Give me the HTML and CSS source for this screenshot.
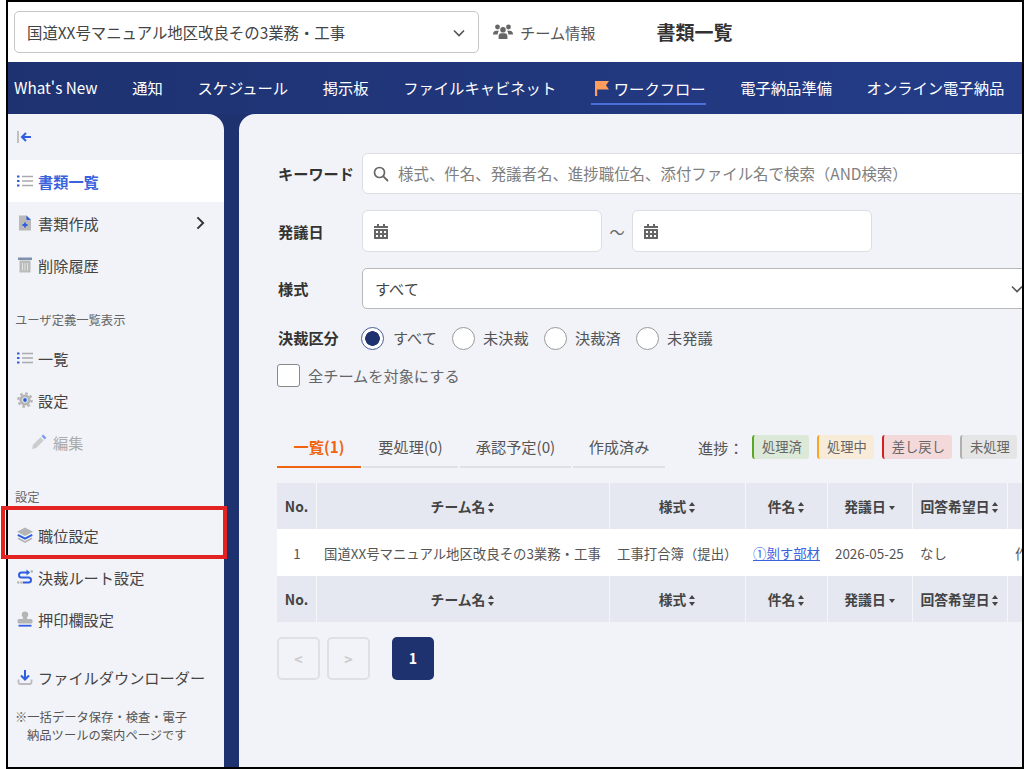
FILE: index.html
```html
<!DOCTYPE html>
<html lang="ja">
<head>
    <meta charset="UTF-8">
    <title>書類一覧</title>
    <link rel="stylesheet" href="styles.css">
</head>
<body>
    <div class="page">
        <div class="frame">
            <header class="topbar">
                <div class="selectbox selectbox--team">
                    <span>国道XX号マニュアル地区改良その3業務・工事</span>
                    <svg class="chev" viewBox="0 0 12 8"><path d="M1 1.5l5 5 5-5" fill="none" stroke="#555" stroke-width="1.6"/></svg>
                </div>
                <a class="teaminfo">
                    <svg viewBox="0 0 20 16" width="20" height="16" fill="#666"><circle cx="4.5" cy="3" r="2.4"/><circle cx="15.5" cy="3" r="2.4"/><circle cx="10" cy="5.8" r="2.8"/><path d="M0 10.5c0-2.4 1.4-3.7 3-3.7h3c-.8.8-1.3 2-1.3 3.7zM20 10.5c0-2.4-1.4-3.7-3-3.7h-3c.8.8 1.3 2 1.3 3.7zM5.6 15v-2.8c0-2 1.2-3 2.6-3h3.6c1.4 0 2.6 1 2.6 3V15z"/></svg>
                    チーム情報
                </a>
                <h1 class="pagetitle">書類一覧</h1>
            </header>

            <nav class="gnav">
                <a>What's New</a>
                <a>通知</a>
                <a>スケジュール</a>
                <a>掲示板</a>
                <a>ファイルキャビネット</a>
                <a class="is-active">
                    <svg viewBox="0 0 14 16" width="14" height="16"><path d="M0 1h14l-3 4.2L14 9.500H2.200V16H0z" fill="#ff9d5c"/></svg>
                    ワークフロー
                </a>
                <a>電子納品準備</a>
                <a>オンライン電子納品</a>
            </nav>

            <div class="wrap">
                <aside class="side">
                    <div class="side__toggle">
                        <svg viewBox="0 0 15 12" width="15" height="12"><path d="M1 0v12" stroke="#aaa" stroke-width="1.4"/><path d="M14 6H5M9 2L5 6l4 4" fill="none" stroke="#2f5fe0" stroke-width="2"/></svg>
                    </div>
                    <a class="side__item is-active">
                        <svg class="ico" viewBox="0 0 16 16"><path d="M5 3.500h11M5 8h11M5 12.500h11" stroke="#aaa" stroke-width="1.400"/><path d="M0 3.500h2.500M0 8h2.500M0 12.500h2.500" stroke="#2f5fe0" stroke-width="2.200"/></svg>
                        書類一覧
                    </a>
                    <a class="side__item">
                        <svg class="ico" viewBox="0 0 16 16"><path d="M2 .5h7.500l4.500 4.500v10.500H2z" fill="#b9b9b9"/><path d="M9.500.5L14 5H9.500z" fill="#2f5fe0"/><path d="M8 7.500v5M5.500 10h5" stroke="#2f5fe0" stroke-width="1.800"/></svg>
                        書類作成
                        <svg class="side__arrow" viewBox="0 0 10 16"><path d="M1.500 1.500L8 8l-6.500 6.500" fill="none" stroke="#333" stroke-width="2.200"/></svg>
                    </a>
                    <a class="side__item">
                        <svg class="ico" viewBox="0 0 16 16"><path d="M1 .5h14v2.500H1z" fill="#7f8fae"/><path d="M2.500 3.500h11v12h-11z" fill="#bbb"/><path d="M5.500 6v7.500M8 6v7.500M10.500 6v7.500" stroke="#e8e8e8" stroke-width=".9"/></svg>
                        削除履歴
                    </a>

                    <div class="side__label side__label--first">ユーザ定義一覧表示</div>
                    <a class="side__item">
                        <svg class="ico" viewBox="0 0 16 16"><path d="M5 3.500h11M5 8h11M5 12.500h11" stroke="#aaa" stroke-width="1.400"/><path d="M0 3.500h2.500M0 8h2.500M0 12.500h2.500" stroke="#2f5fe0" stroke-width="2.200"/></svg>
                        一覧
                    </a>
                    <a class="side__item">
                        <svg class="ico" viewBox="0 0 16 16"><circle cx="8" cy="8" r="6.600" fill="none" stroke="#b5b5b5" stroke-width="2.400" stroke-dasharray="2.600 2.580"/><circle cx="8" cy="8" r="4.200" fill="none" stroke="#b5b5b5" stroke-width="2.800"/><circle cx="8" cy="8" r="1.900" fill="#2f5fe0"/></svg>
                        設定
                    </a>
                    <a class="side__item side__item--sub">
                        <svg class="ico" viewBox="0 0 16 16"><path d="M1 15l1-4.200 7.500-7.500 3.200 3.200L5.200 14z" fill="#ccc"/><path d="M10.500 2.300l1.700-1.700 3.200 3.200-1.700 1.700z" fill="#7d9cf0"/></svg>
                        編集
                    </a>

                    <div class="side__label">設定</div>
                    <a class="side__item">
                        <svg class="ico" viewBox="0 0 16 16"><path d="M8 .5l8 4.300-8 4.300-8-4.300z" fill="#b5b5b5"/><path d="M.8 7.800L8 11.700l7.200-3.900" fill="none" stroke="#2f5fe0" stroke-width="2"/><path d="M1 11.200l7 3.800 7-3.800" fill="none" stroke="#b5b5b5" stroke-width="1.800"/></svg>
                        職位設定
                    </a>
                    <a class="side__item">
                        <svg class="ico" viewBox="0 0 16 16"><path d="M12 3.500H4.500a2.500 2.500 0 0 0 0 5h7a2.500 2.500 0 0 1 0 5H6" fill="none" stroke="#2f5fe0" stroke-width="2"/><path d="M9.500.5L13 3.500l-3.500 3z" fill="#2f5fe0"/><circle cx="14.800" cy="2.400" r="1.300" fill="#b5b5b5"/><circle cx="1.300" cy="13.500" r="1.300" fill="#b5b5b5"/><circle cx="4.500" cy="13.500" r="1.300" fill="#b5b5b5"/></svg>
                        決裁ルート設定
                    </a>
                    <a class="side__item">
                        <svg class="ico" viewBox="0 0 16 16"><circle cx="8" cy="3.600" r="3.200" fill="#b5b5b5"/><path d="M6.300 5h3.400l.6 3.500H5.700z" fill="#b5b5b5"/><rect x=".5" y="8" width="15" height="4.500" rx="1.500" fill="#b5b5b5"/><path d="M1.500 14.700h13" stroke="#2f5fe0" stroke-width="1.800"/></svg>
                        押印欄設定
                    </a>

                    <a class="side__item side__item--dl">
                        <svg class="ico" viewBox="0 0 16 16"><path d="M8 1v9M4 6.500l4 4 4-4" fill="none" stroke="#2f5fe0" stroke-width="2"/><path d="M1.500 10.500v3a1.500 1.500 0 0 0 1.500 1.500h10a1.500 1.500 0 0 0 1.500-1.500v-3" fill="none" stroke="#bbb" stroke-width="1.800"/></svg>
                        ファイルダウンローダー
                    </a>
                    <p class="side__note">※一括データ保存・検査・電子納品ツールの案内ページです</p>
                </aside>

                <main class="content">
                    <div class="form-row form-row--first">
                        <label class="form-label">キーワード</label>
                        <div class="field field--search">
                            <svg viewBox="0 0 16 16" width="16" height="16"><circle cx="6.500" cy="6.500" r="5" fill="none" stroke="#666" stroke-width="1.700"/><path d="M10.300 10.300L15 15" stroke="#666" stroke-width="1.900"/></svg>
                            <input type="text" placeholder="様式、件名、発議者名、進捗職位名、添付ファイル名で検索（AND検索）">
                        </div>
                    </div>
                    <div class="form-row">
                        <label class="form-label">発議日</label>
                        <div class="field field--date">
                            <svg class="cal" viewBox="0 0 14 15"><path d="M3 0h2v2h4V0h2v2h3v2H0V2h3zM0 5h14v10H0z" fill="#666"/><path d="M2 7h2v2H2zM6 7h2v2H6zM10 7h2v2h-2zM2 11h2v2H2zM6 11h2v2H6zM10 11h2v2h-2z" fill="#fff"/></svg>
                        </div>
                        <span class="tilde">～</span>
                        <div class="field field--date">
                            <svg class="cal" viewBox="0 0 14 15"><path d="M3 0h2v2h4V0h2v2h3v2H0V2h3zM0 5h14v10H0z" fill="#666"/><path d="M2 7h2v2H2zM6 7h2v2H6zM10 7h2v2h-2zM2 11h2v2H2zM6 11h2v2H6zM10 11h2v2h-2z" fill="#fff"/></svg>
                        </div>
                    </div>
                    <div class="form-row">
                        <label class="form-label">様式</label>
                        <div class="selectbox selectbox--form">
                            <span>すべて</span>
                            <svg class="chev" viewBox="0 0 12 8"><path d="M1 1.500l5 5 5-5" fill="none" stroke="#555" stroke-width="1.600"/></svg>
                        </div>
                    </div>
                    <div class="form-row form-row--radio">
                        <label class="form-label">決裁区分</label>
                        <span class="radio is-on"></span><span class="radio-text">すべて</span>
                        <span class="radio"></span><span class="radio-text">未決裁</span>
                        <span class="radio"></span><span class="radio-text">決裁済</span>
                        <span class="radio"></span><span class="radio-text">未発議</span>
                    </div>
                    <div class="checkrow">
                        <span class="check"></span>全チームを対象にする
                    </div>

                    <div class="tabbar">
                        <a class="tab tab--all is-active">一覧(1)</a>
                        <a class="tab tab--todo">要処理(0)</a>
                        <a class="tab tab--plan">承認予定(0)</a>
                        <a class="tab tab--done">作成済み</a>
                        <div class="legend">
                            <span class="legend__title">進捗：</span>
                            <span class="badge badge--done">処理済</span>
                            <span class="badge badge--doing">処理中</span>
                            <span class="badge badge--back">差し戻し</span>
                            <span class="badge badge--none">未処理</span>
                        </div>
                    </div>

                    <table class="doclist">
                        <colgroup>
                            <col class="c-no"><col class="c-team"><col class="c-form"><col class="c-name"><col class="c-date"><col class="c-hope"><col class="c-last">
                        </colgroup>
                        <thead>
                            <tr>
                                <th>No.</th>
                                <th>チーム名<i class="sort"></i></th>
                                <th>様式<i class="sort"></i></th>
                                <th>件名<i class="sort"></i></th>
                                <th>発議日<i class="sort sort--desc"></i></th>
                                <th>回答希望日<i class="sort"></i></th>
                                <th></th>
                            </tr>
                        </thead>
                        <tbody>
                            <tr>
                                <td class="num">1</td>
                                <td>国道XX号マニュアル地区改良その3業務・工事</td>
                                <td>工事打合簿（提出）</td>
                                <td><a class="link">①剝す部材</a></td>
                                <td>2026-05-25</td>
                                <td>なし</td>
                                <td>作成者</td>
                            </tr>
                        </tbody>
                        <tfoot>
                            <tr>
                                <th>No.</th>
                                <th>チーム名<i class="sort"></i></th>
                                <th>様式<i class="sort"></i></th>
                                <th>件名<i class="sort"></i></th>
                                <th>発議日<i class="sort sort--desc"></i></th>
                                <th>回答希望日<i class="sort"></i></th>
                                <th></th>
                            </tr>
                        </tfoot>
                    </table>

                    <div class="pager">
                        <a class="pager__btn is-off">&lt;</a>
                        <a class="pager__btn is-off">&gt;</a>
                        <a class="pager__btn is-current">1</a>
                    </div>
                </main>
            </div>
        </div>
        <div class="redbox"></div>
    </div>
</body>
</html>
```

FILE: styles.css
```css
* {
    box-sizing: border-box;
}
html, body {
    margin: 0;
    height: 100%;
    overflow: hidden;
    background: #fff;
}
body {
    font: 15.2px/1.5 "Noto Sans CJK JP", "Noto Sans", sans-serif;
    color: #444;
}
a {
    color: inherit;
    text-decoration: none;
}
.page {
    position: relative;
    width: 1024px;
    height: 769px;
}
.frame {
    display: flex;
    flex-direction: column;
    width: 1018px;
    height: 769px;
    margin-left: 6px;
    border: 2px solid #000;
    overflow: hidden;
}
.redbox {
    position: absolute;
    left: 1px;
    top: 506px;
    width: 226px;
    height: 53px;
    border: 4px solid #e32222;
}

/* top */
.topbar {
    display: flex;
    align-items: center;
    flex: none;
    height: 60px;
    padding-left: 6px;
    background: #fff;
}
.selectbox {
    display: flex;
    align-items: center;
    justify-content: space-between;
    background: #fff;
    border: 1px solid #c6c6c6;
    border-radius: 5px;
}
.selectbox--team {
    width: 465px;
    height: 42px;
    padding: 1px 13px 0 12px;
    font-size: 15.4px;
}
.chev {
    width: 12px;
    height: 8px;
}
.teaminfo {
    display: flex;
    align-items: center;
    gap: 7px;
    margin-left: 14px;
    color: #555;
}
.pagetitle {
    margin: 0 0 0 61px;
    font-size: 19px;
    font-weight: 700;
    color: #333;
}

/* global nav */
.gnav {
    display: flex;
    align-items: center;
    flex: none;
    gap: 34.6px;
    height: 52px;
    padding: 0 0 1px 6px;
    font-size: 15.3px;
    color: #fff;
    background: linear-gradient(to right, #1e3270, #243c88);
    white-space: nowrap;
}
.gnav a {
    display: flex;
    align-items: center;
    height: 29px;
}
.gnav a.is-active {
    gap: 5px;
    height: 31px;
    margin-top: 3px;
    padding-left: 4px;
    border-bottom: 2px solid #4a6fd8;
}

/* body */
.wrap {
    display: flex;
    flex: 1;
    gap: 15px;
    min-height: 0;
    background: #1e3270;
}
.side {
    flex: none;
    width: 216px;
    background: #f1f3f8;
    border-top-right-radius: 16px;
}
.side__toggle {
    display: flex;
    align-items: center;
    height: 46px;
    padding-left: 9px;
}
.side__item {
    display: flex;
    align-items: center;
    gap: 5px;
    height: 42px;
    padding-left: 9px;
    white-space: nowrap;
}
.side__item.is-active {
    color: #3b62dd;
    font-weight: 700;
    background: #fff;
}
.side__item--sub {
    gap: 6px;
    padding-left: 23px;
    color: #aaa;
}
.side__item--dl {
    margin-top: 16px;
}
.ico {
    flex: none;
    width: 16px;
    height: 16px;
}
.side__arrow {
    width: 9px;
    height: 14px;
    margin-left: 92px;
}
.side__label {
    display: flex;
    align-items: center;
    height: 51px;
    padding: 17px 0 0 7px;
    font-size: 12.3px;
    color: #666;
}
.side__note {
    margin: 10px 0 0;
    padding: 0 30px 0 19px;
    font-size: 12.3px;
    line-height: 18px;
    text-indent: -12px;
    color: #555;
}

/* search form */
.content {
    flex: 1;
    min-width: 0;
    padding: 39px 0 0 38px;
    background: #f1f3f8;
    border-top-left-radius: 16px;
    overflow: hidden;
}
.form-row {
    display: flex;
    align-items: center;
    margin-top: 16px;
}
.form-row--first {
    margin-top: 0;
}
.form-label {
    flex: none;
    width: 85px;
    padding-left: 1px;
    font-weight: 700;
    color: #333;
}
.field {
    display: flex;
    align-items: center;
    background: #fff;
    border: 1px solid #dcdde2;
    border-radius: 6px;
}
.field--search {
    flex: none;
    gap: 9px;
    width: 680px;
    height: 41px;
    padding-left: 10px;
}
.field--search input {
    flex: 1;
    border: 0;
    padding: 0;
    outline: none;
    font: inherit;
    font-size: 15.45px;
    background: transparent;
}
.field--search input::placeholder {
    color: #808080;
    opacity: 1;
}
.field--date {
    width: 240px;
    height: 42px;
    padding-left: 11px;
}
.cal {
    width: 14px;
    height: 15px;
}
.tilde {
    width: 30px;
    text-align: center;
    color: #666;
}
.selectbox--form {
    flex: none;
    width: 680px;
    height: 41px;
    padding: 0 18px 0 12px;
    border-color: #b8b8b8;
}
.form-row--radio {
    margin-top: 17px;
    height: 24px;
}
.form-row--radio .form-label {
    padding-bottom: 2px;
}
.radio {
    flex: none;
    width: 23px;
    height: 23px;
    background: #fff;
    border: 1px solid #999;
    border-radius: 50%;
}
.radio.is-on {
    margin-left: -1px;
    border-color: #4a5f9c;
    background: radial-gradient(circle, #1e3270 0 7px, #fff 7.6px);
}
.radio-text {
    width: 69px;
    padding: 0 0 2px 8px;
    color: #555;
}
.radio.is-on + .radio-text {
    width: 68px;
    padding-left: 9px;
}
.checkrow {
    display: flex;
    align-items: center;
    gap: 8px;
    height: 24px;
    margin-top: 14px;
    padding-bottom: 2px;
    color: #666;
}
.check {
    flex: none;
    width: 23px;
    height: 23px;
    background: #fff;
    border: 1px solid #888;
    border-radius: 3px;
}

/* tabs */
.tabbar {
    display: flex;
    align-items: flex-end;
    gap: 2px;
    width: 760px;
    height: 36px;
    margin-top: 44px;
}
.tab {
    height: 36px;
    line-height: 29px;
    text-align: center;
    color: #555;
    border-bottom: 2px solid #e0e1e4;
}
.tab.is-active {
    color: #f0640f;
    font-weight: 700;
    border-bottom-color: #f0640f;
}
.tab--all { width: 84px; }
.tab--todo { width: 95px; }
.tab--plan { width: 111px; }
.tab--done { width: 92px; }
.legend {
    display: flex;
    align-items: center;
    gap: 8px;
    align-self: flex-start;
    height: 24px;
    margin: 3px 0 0 31px;
    font-size: 13.3px;
    white-space: nowrap;
}
.legend__title {
    width: 46px;
    font-size: 15.2px;
    color: #555;
}
.badge {
    height: 24px;
    padding: 0 7px 0 8px;
    line-height: 23px;
    color: #666;
    border-left: 2px solid;
    border-radius: 3px;
}
.badge--done { background: #dde9d8; border-color: #5aa822; }
.badge--doing { background: #f8ecd9; border-color: #f5a623; }
.badge--back { background: #f4d9da; border-color: #d0201f; }
.badge--none { background: #e5e5e5; border-color: #b0b0b0; }

/* table */
.doclist {
    width: 751px;
    margin-top: 15px;
    border-collapse: separate;
    border-spacing: 0;
    table-layout: fixed;
    font-size: 13.4px;
    white-space: nowrap;
}
.c-no { width: 40px; }
.c-team { width: 293px; }
.c-form { width: 136px; }
.c-name { width: 82px; }
.c-date { width: 85px; }
.c-hope { width: 95px; }
.c-last { width: 20px; }
.doclist th {
    height: 46px;
    padding: 0;
    font-size: 13.8px;
    font-weight: 700;
    color: #444;
    background: #e5e8f1;
    border-right: 1px solid #f5f6fa;
}
.doclist td {
    height: 47px;
    padding: 1px 0 0 7px;
    color: #555;
    background: #fff;
}
.doclist td.num {
    padding: 1px 0 0;
    text-align: center;
}
.link {
    color: #3b62dd;
    text-decoration: underline;
}
.sort {
    position: relative;
    display: inline-block;
    width: 7px;
    height: 11px;
    margin-left: 3px;
    vertical-align: -1px;
}
.sort:before,
.sort:after {
    content: "";
    position: absolute;
    left: 0;
    border: 3.5px solid transparent;
}
.sort:before {
    top: -3px;
    border-bottom: 4px solid #444;
}
.sort:after {
    bottom: -3px;
    border-top: 4px solid #444;
}
.sort--desc:before {
    display: none;
}
.sort--desc:after {
    bottom: 0;
}

/* pager */
.pager {
    display: flex;
    gap: 7px;
    margin-top: 15px;
}
.pager__btn {
    width: 43px;
    height: 43px;
    font-size: 14.2px;
    font-weight: 700;
    line-height: 43px;
    text-align: center;
    border-radius: 5px;
}
.pager__btn.is-off {
    color: #ccc;
    border: 2px solid #dfe0e4;
    line-height: 41px;
}
.pager__btn.is-current {
    width: 42px;
    margin-left: 15px;
    color: #fff;
    background: #1e3270;
}
```
